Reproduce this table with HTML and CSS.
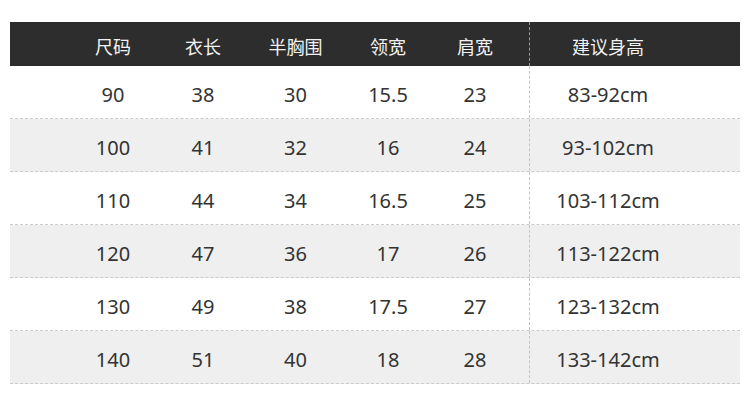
FILE: index.html
```html
<!DOCTYPE html>
<html lang="zh">
<head>
<meta charset="utf-8">
<title>尺码表</title>
<link rel="stylesheet" href="styles.css">
</head>
<body>
<div class="table">
  <div class="row head">
    <div class="cell">尺码</div><div class="cell">衣长</div><div class="cell">半胸围</div><div class="cell">领宽</div><div class="cell">肩宽</div><div class="cell last">建议身高</div>
  </div>
  <div class="row">
    <div class="cell">90</div><div class="cell">38</div><div class="cell">30</div><div class="cell">15.5</div><div class="cell">23</div><div class="cell last">83-92cm</div>
  </div>
  <div class="row alt">
    <div class="cell">100</div><div class="cell">41</div><div class="cell">32</div><div class="cell">16</div><div class="cell">24</div><div class="cell last">93-102cm</div>
  </div>
  <div class="row">
    <div class="cell">110</div><div class="cell">44</div><div class="cell">34</div><div class="cell">16.5</div><div class="cell">25</div><div class="cell last">103-112cm</div>
  </div>
  <div class="row alt">
    <div class="cell">120</div><div class="cell">47</div><div class="cell">36</div><div class="cell">17</div><div class="cell">26</div><div class="cell last">113-122cm</div>
  </div>
  <div class="row">
    <div class="cell">130</div><div class="cell">49</div><div class="cell">38</div><div class="cell">17.5</div><div class="cell">27</div><div class="cell last">123-132cm</div>
  </div>
  <div class="row alt">
    <div class="cell">140</div><div class="cell">51</div><div class="cell">40</div><div class="cell">18</div><div class="cell">28</div><div class="cell last">133-142cm</div>
  </div>
</div>
</body>
</html>
```

FILE: styles.css
```css
html, body {
  margin: 0;
  padding: 0;
  background: #ffffff;
}

.table {
  width: 730px;
  padding: 22px 10px 0 10px;
  font-family: "Noto Sans", "Noto Sans CJK SC", sans-serif;
  color: #333333;
}

.row {
  display: grid;
  grid-template-columns: 90px 90px 95px 90px 84px 1fr;
  padding-left: 58px;
  height: 52px;
  border-bottom: 1px dashed #cccccc;
  font-size: 20px;
}

.row.alt {
  background: #efefef;
}

.row.head {
  height: 44px;
  border-bottom: none;
  background: #2d2d2d;
  color: #f2f2f2;
  font-size: 18px;
  font-family: "Noto Sans CJK SC", "Noto Sans", sans-serif;
}

.cell {
  display: flex;
  align-items: center;
  justify-content: center;
  padding-top: 4px;
  white-space: nowrap;
}

.head .cell {
  padding-top: 3px;
}

.cell.last {
  margin-left: 12px;
  padding-right: 54px;
  border-left: 1px dashed #c4c4c4;
}

.head .cell.last {
  border-left-color: #9a9a9a;
}
```
